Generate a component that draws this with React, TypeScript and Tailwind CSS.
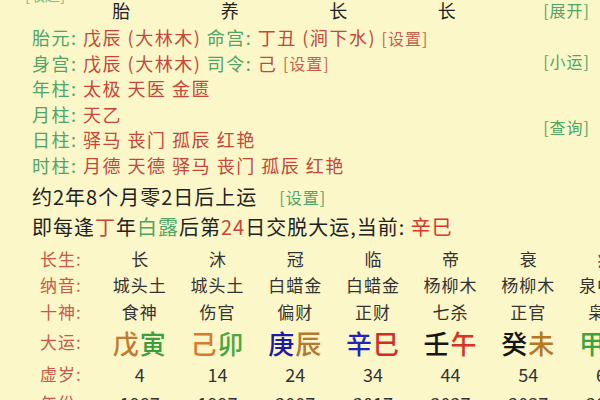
import React from "react";

const GREEN = "text-[#4fa566]";
const RED = "text-[#c4473a]";

interface InfoPart {
  text: string;
  kind: "label" | "value" | "link";
}

const infoLines: InfoPart[][] = [
  [
    { text: "胎元:", kind: "label" },
    { text: " 戊辰 (大林木) ", kind: "value" },
    { text: "命宫:", kind: "label" },
    { text: " 丁丑 (涧下水) ", kind: "value" },
    { text: "[设置]", kind: "link" },
  ],
  [
    { text: "身宫:", kind: "label" },
    { text: " 戊辰 (大林木) ", kind: "value" },
    { text: "司令:", kind: "label" },
    { text: " 己 ", kind: "value" },
    { text: "[设置]", kind: "link" },
  ],
  [
    { text: "年柱:", kind: "label" },
    { text: " 太极 天医 金匮", kind: "value" },
  ],
  [
    { text: "月柱:", kind: "label" },
    { text: " 天乙", kind: "value" },
  ],
  [
    { text: "日柱:", kind: "label" },
    { text: " 驿马 丧门 孤辰 红艳", kind: "value" },
  ],
  [
    { text: "时柱:", kind: "label" },
    { text: " 月德 天德 驿马 丧门 孤辰 红艳", kind: "value" },
  ],
];

interface DayunItem {
  changsheng: string;
  nayin: string;
  shishen: string;
  gan: string;
  ganColor: string;
  zhi: string;
  zhiColor: string;
  age: number;
  year: number;
}

const dayun: DayunItem[] = [
  { changsheng: "长", nayin: "城头土", shishen: "食神", gan: "戊", ganColor: "text-[#c27a2e]", zhi: "寅", zhiColor: "text-[#3c9f3f]", age: 4, year: 1987 },
  { changsheng: "沐", nayin: "城头土", shishen: "伤官", gan: "己", ganColor: "text-[#d67b2c]", zhi: "卯", zhiColor: "text-[#48a83c]", age: 14, year: 1997 },
  { changsheng: "冠", nayin: "白蜡金", shishen: "偏财", gan: "庚", ganColor: "text-[#1c1ca2]", zhi: "辰", zhiColor: "text-[#b27a34]", age: 24, year: 2007 },
  { changsheng: "临", nayin: "白蜡金", shishen: "正财", gan: "辛", ganColor: "text-[#2323b8]", zhi: "巳", zhiColor: "text-[#d42a2a]", age: 34, year: 2017 },
  { changsheng: "帝", nayin: "杨柳木", shishen: "七杀", gan: "壬", ganColor: "text-[#151515]", zhi: "午", zhiColor: "text-[#d83222]", age: 44, year: 2027 },
  { changsheng: "衰", nayin: "杨柳木", shishen: "正官", gan: "癸", ganColor: "text-[#151515]", zhi: "未", zhiColor: "text-[#b8781f]", age: 54, year: 2037 },
  { changsheng: "病", nayin: "泉中水", shishen: "枭神", gan: "甲", ganColor: "text-[#3aa53c]", zhi: "申", zhiColor: "text-[#c27a2e]", age: 64, year: 2047 },
];

function RowLabel({ children }: { children: React.ReactNode }) {
  return <div className="text-[17px] tracking-[1px] text-[#c75a48]">{children}</div>;
}

export default function App() {
  return (
    <div
      className="w-[600px] h-[400px] overflow-hidden bg-[#fbf7c9] text-[#222]"
      style={{ fontFamily: '"Noto Sans CJK SC", "Noto Sans", sans-serif' }}
    >
      <div className="-mt-[10px]">
        {/* partially scrolled-off row */}
        <div className={`h-[10px] pl-[25px] text-[15px] leading-[10px] ${GREEN} opacity-70`}>
          [收起]
        </div>

        {/* Top info block */}
        <div className="flex">
          <div className="flex-1 pl-[32px]">
            <div className="h-[20px] flex items-center pl-[35px] text-[18px] text-[#222]">
              {["胎", "养", "长", "长"].map((c, i) => (
                <div key={i} className="w-[108.5px] text-center">
                  {c}
                </div>
              ))}
            </div>

            <div className="mt-[5px]">
              {infoLines.map((line, i) => (
                <div
                  key={i}
                  className="h-[25.5px] flex items-center text-[18px] tracking-[1.5px] whitespace-pre"
                >
                  {line.map((p, j) => (
                    <span
                      key={j}
                      className={
                        p.kind === "label"
                          ? GREEN
                          : p.kind === "value"
                          ? RED
                          : "text-[16px] tracking-[1px] text-[#c8604e]"
                      }
                    >
                      {p.text}
                    </span>
                  ))}
                </div>
              ))}
            </div>
          </div>

          {/* Right links */}
          <div
            className={`w-[62px] pr-[10px] flex flex-col items-end text-[16px] tracking-[1px] ${GREEN}`}
          >
            <div className="h-[20px] flex items-center">[展开]</div>
            <div className="h-[20px] mt-[31px] flex items-center">[小运]</div>
            <div className="h-[20px] mt-[46px] flex items-center">[查询]</div>
          </div>
        </div>

        {/* Qiyun lines */}
        <div className="pl-[32px] mt-[4px] text-[20px] tracking-[1px] text-[#222]">
          <div className="h-[30px] flex items-center">
            <span>约2年8个月零2日后上运</span>
            <span className={`ml-[22px] text-[16px] ${GREEN}`}>[设置]</span>
          </div>
          <div className="h-[30px] flex items-center whitespace-pre">
            <span>即每逢</span>
            <span className={RED}>丁</span>
            <span>年</span>
            <span className={GREEN}>白露</span>
            <span>后第</span>
            <span className={RED}>24</span>
            <span>日交脱大运,当前: </span>
            <span className="text-[#d8382a]">辛巳</span>
          </div>
        </div>

        {/* Dayun table */}
        <div className="mt-[4px] pl-[40px] grid grid-cols-[61px_repeat(7,77.7px)] items-center">
          <div className="h-[26px] flex items-center"><RowLabel>长生:</RowLabel></div>
          {dayun.map((d, i) => (
            <div key={i} className="h-[26px] flex items-center justify-center text-[17px] text-[#333]">
              {d.changsheng}
            </div>
          ))}

          <div className="h-[26px] flex items-center"><RowLabel>纳音:</RowLabel></div>
          {dayun.map((d, i) => (
            <div
              key={i}
              className="h-[26px] flex items-center justify-center text-[17px] tracking-[1px] text-[#333]"
            >
              {d.nayin}
            </div>
          ))}

          <div className="h-[28px] flex items-center"><RowLabel>十神:</RowLabel></div>
          {dayun.map((d, i) => (
            <div
              key={i}
              className="h-[28px] flex items-center justify-center text-[17px] tracking-[1px] text-[#333]"
            >
              {d.shishen}
            </div>
          ))}

          <div className="h-[32px] flex items-center"><RowLabel>大运:</RowLabel></div>
          {dayun.map((d, i) => (
            <div
              key={i}
              className="h-[32px] flex items-center justify-center text-[26px] tracking-[1px] font-medium"
            >
              <span className={d.ganColor}>{d.gan}</span>
              <span className={d.zhiColor}>{d.zhi}</span>
            </div>
          ))}

          <div className="h-[32px] flex items-center"><RowLabel>虚岁:</RowLabel></div>
          {dayun.map((d, i) => (
            <div key={i} className="h-[32px] flex items-center justify-center text-[18px] text-[#333]">
              {d.age}
            </div>
          ))}

          <div className="h-[26px] flex items-center"><RowLabel>年份:</RowLabel></div>
          {dayun.map((d, i) => (
            <div key={i} className="h-[26px] flex items-center justify-center text-[18px] text-[#333]">
              {d.year}
            </div>
          ))}
        </div>
      </div>
    </div>
  );
}
